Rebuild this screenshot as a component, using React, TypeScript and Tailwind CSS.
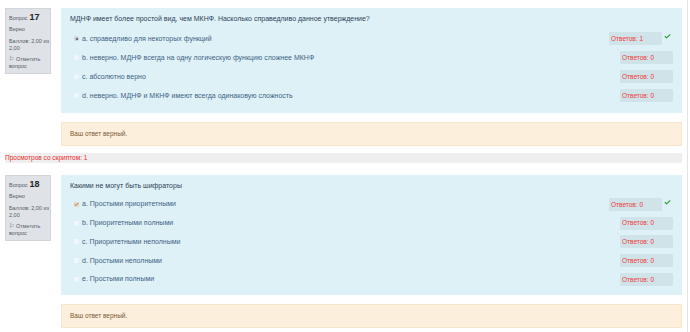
import { Check } from "lucide-react";

type Opt = { label: string; count: number; chosen?: boolean };

const q17: Opt[] = [
  { label: "a. справедливо для некоторых функций", count: 1, chosen: true },
  { label: "b. неверно. МДНФ всегда на одну логическую функцию сложнее МКНФ", count: 0 },
  { label: "c. абсолютно верно", count: 0 },
  { label: "d. неверно. МДНФ и МКНФ имеют всегда одинаковую сложность", count: 0 },
];

const q18: Opt[] = [
  { label: "a. Простыми приоритетными", count: 0, chosen: true },
  { label: "b. Приоритетными полными", count: 0 },
  { label: "c. Приоритетными неполными", count: 0 },
  { label: "d. Простыми неполными", count: 0 },
  { label: "e. Простыми полными", count: 0 },
];

function Info({ num }: { num: number }) {
  return (
    <div className="w-[46px] h-[66px] shrink-0 bg-[#dfe2e6] border border-[#d2d6db] pl-[3px] pt-[3px] text-[5.5px] leading-[7px] text-[#555c66]">
      <div className="flex items-baseline gap-[2px]">
        <span>Вопрос</span>
        <span className="text-[9px] leading-[10px] font-bold text-[#222]">{num}</span>
      </div>
      <div className="mt-[4px]">Верно</div>
      <div className="mt-[5px]">Баллов: 2,00 из</div>
      <div>2,00</div>
      <div className="mt-[4px] flex gap-[2px]">
        <span>⚐</span>
        <span>Отметить</span>
      </div>
      <div>вопрос</div>
    </div>
  );
}

function Question({
  num,
  text,
  opts,
  multi,
}: {
  num: number;
  text: string;
  opts: Opt[];
  multi?: boolean;
}) {
  return (
    <div className="flex">
      <Info num={num} />
      <div className="flex-1 ml-[10px] flex flex-col">
        <div
          className={`bg-[#def1f7] pl-[9px] pr-[9px] pt-[6px] ${
            multi ? "pb-[6px]" : "pb-[8px]"
          }`}
        >
          <div className="h-[10px] text-[7px] leading-[10px] text-[#2f4256]">{text}</div>
          <div className={multi ? "mt-[4px]" : "mt-[5px]"}>
            {opts.map((o) => (
              <div
                key={o.label}
                className={`${multi ? "h-[18.75px]" : "h-[19px]"} flex items-center`}
              >
                <div className="pl-[4px] flex items-center flex-1">
                  {multi ? (
                    <span
                      className={`w-[5px] h-[5px] rounded-[1px] flex items-center justify-center ${
                        o.chosen ? "bg-[#e9d9c4]" : "bg-[#eef7fa]"
                      }`}
                    >
                      {o.chosen && (
                        <Check className="w-[5px] h-[5px]" stroke="#8a6a4a" strokeWidth={4} />
                      )}
                    </span>
                  ) : (
                    <span
                      className={`w-[5px] h-[5px] rounded-full flex items-center justify-center ${
                        o.chosen ? "bg-[#c9cfd4]" : "bg-[#eef7fa]"
                      }`}
                    >
                      {o.chosen && <span className="w-[2px] h-[2px] rounded-full bg-[#555]" />}
                    </span>
                  )}
                  <span className="ml-[3px] text-[7px] leading-[10px] text-[#3e6384]">
                    {o.label}
                  </span>
                </div>
                <div className="w-[53px] h-[13px] bg-[#cfe3e9] rounded-[1px] pl-[2px] flex items-center text-[6.5px] text-[#ee3b3b]">
                  Ответов: {o.count}
                </div>
                {o.chosen && (
                  <div className="w-[11px] h-[13px] flex items-start justify-center pt-[1px]">
                    <Check className="w-[7px] h-[7px]" stroke="#35a535" strokeWidth={4} />
                  </div>
                )}
              </div>
            ))}
          </div>
        </div>
        <div className="mt-[9px] h-[24px] bg-[#fcefdc] border border-[#f8e6cc] pl-[8px] flex items-center text-[6.5px] text-[#7d5a35]">
          Ваш ответ верный.
        </div>
      </div>
    </div>
  );
}

export default function App() {
  return (
    <div
      className="w-[690px] h-[332px] bg-white flex overflow-hidden"
      style={{ fontFamily: '"Liberation Sans", Arial, sans-serif' }}
    >
      <div className="w-[677px] ml-[5px] pt-[8px]">
        <Question
          num={17}
          text="МДНФ имеет более простой вид, чем МКНФ. Насколько справедливо данное утверждение?"
          opts={q17}
        />
        <div className="mt-[7px] h-[10px] bg-[#efefef] flex items-center text-[6.5px] text-[#ee2b2b]">
          Просмотров со скриптом: 1
        </div>
        <div className="mt-[12px]">
          <Question num={18} text="Какими не могут быть шифраторы" opts={q18} multi />
        </div>
      </div>
      <div className="ml-[5px] w-px h-full bg-[#e3e3e3]" />
    </div>
  );
}
